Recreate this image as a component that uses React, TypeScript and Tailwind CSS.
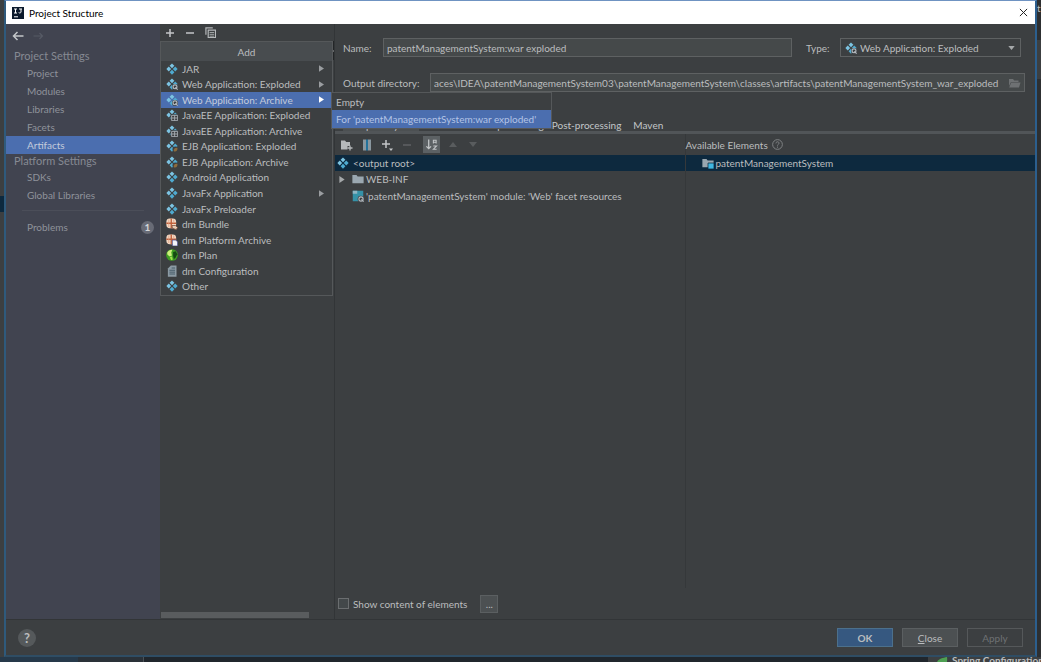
import type { ReactNode } from "react";

type Badge = "none" | "web" | "grid" | "bean";

interface MenuItem {
  label: string;
  icon: ReactNode;
  submenu?: boolean;
  active?: boolean;
}

const ArtifactIcon = ({ badge = "none" }: { badge?: Badge }) => (
  <svg viewBox="0 0 16 16" className="size-3 shrink-0" aria-hidden="true">
    <path d="M8 0.500 11.200 3.700 8 6.900 4.800 3.700Z" fill="#7cc4e2" />
    <path d="M3.700 4.800 6.900 8 3.700 11.200 0.500 8Z" fill="#7cc4e2" />
    <path d="M12.300 4.800 15.500 8 12.300 11.200 9.100 8Z" fill="#4fabd0" />
    <path d="M8 9.100 11.200 12.300 8 15.500 4.800 12.300Z" fill="#4fabd0" />
    {badge === "web" && (
      <g>
        <circle cx="12" cy="12" r="4" fill="#3c3f41" />
        <circle cx="12" cy="11.800" r="2.600" fill="none" stroke="#b4bac0" strokeWidth="1.500" />
        <path d="M12.500 12.500l3 3" fill="none" stroke="#b4bac0" strokeWidth="1.600" />
      </g>
    )}
    {badge === "grid" && (
      <g>
        <rect x="6" y="7" width="10" height="9" fill="#3c3f41" />
        <path d="M7.500 8.500h8v7h-8zM7.500 12h8M11.500 8.500v7" fill="none" stroke="#a9b0b6" strokeWidth="1.200" />
      </g>
    )}
    {badge === "bean" && (
      <g>
        <circle cx="12.500" cy="12.500" r="3.800" fill="#3c3f41" />
        <path d="M10.500 15c-1-2.500 1-5 4.800-4.500 0.400 3-1.700 5.500-4.800 4.500Z" fill="#8d6b3c" />
      </g>
    )}
  </svg>
);

const BundleIcon = ({ archive = false }: { archive?: boolean }) => (
  <svg viewBox="0 0 16 16" className="size-3 shrink-0" aria-hidden="true">
    <rect x="0.500" y="0.500" width="13" height="13" rx="4.500" fill="#f3d9c3" />
    <path d="M7 0.500v13M0.500 7h13" stroke="#c0603a" strokeWidth="1.800" />
    <path d="M3.700 2v10M10.300 2v5" stroke="#dfa080" strokeWidth="1" />
    {archive ? (
      <path d="M8.500 8h4.500l2.500 2.500V16H8.500Z" fill="#f4f4f8" stroke="#4a4d8c" strokeWidth="1" />
    ) : (
      <path d="M8 10h4.500l3 2.500-2 3-5-2Z" fill="#e8cdb6" stroke="#7a4a33" strokeWidth="1" />
    )}
  </svg>
);

const PlanIcon = () => (
  <svg viewBox="0 0 16 16" className="size-3 shrink-0" aria-hidden="true">
    <circle cx="8" cy="8" r="7.800" fill="#3f9f22" />
    <path d="M1.500 5C3 2 6 0.500 8.500 1L7 4.500 8 8.500 5 10 2 7.500Z" fill="#cdf07c" />
    <path d="M9.500 4 13 3 15 7 13 11 10.500 13.500 9.500 9Z" fill="#164a14" />
    <path d="M5 11l3-1 1 4-2 1Z" fill="#a2e44c" />
  </svg>
);

const ConfigIcon = () => (
  <svg viewBox="0 0 16 16" className="size-3 shrink-0" aria-hidden="true">
    <path d="M6.500 0.500H14v15H2.500V4.500Z" fill="#8b9aa3" />
    <path d="M4.500 7h7.500M4.500 9.500h7.500M4.500 12h7.500M7.500 4h4.500" stroke="#3f5562" strokeWidth="1.200" />
  </svg>
);

const FolderIcon = ({ module = false }: { module?: boolean }) => (
  <svg viewBox="0 0 16 16" className="size-3 shrink-0" aria-hidden="true">
    <path d="M0.500 2.500h5.500l1.500 2H15.500v9H0.500Z" fill="#9aa7b0" />
    {module && <path d="M8 8h8v8H8Z" fill="#40b6e0" stroke="#0d293e" strokeWidth="1" />}
  </svg>
);

const FacetIcon = () => (
  <svg viewBox="0 0 16 16" className="size-3 shrink-0" aria-hidden="true">
    <path d="M1 1h14v14H1Z" fill="#3592a8" />
    <path d="M1 1h6v4H1Z" fill="#8fb6c4" />
    <circle cx="12" cy="12" r="4.500" fill="#3c3f41" />
    <circle cx="12" cy="12" r="2.800" fill="none" stroke="#b4bac0" strokeWidth="1.500" />
    <path d="M12.500 12.500l3 3" stroke="#b4bac0" strokeWidth="1.500" />
  </svg>
);

const Triangle = ({ className }: { className: string }) => (
  <svg viewBox="0 0 6 8" className={className} aria-hidden="true">
    <path d="M0 0 6 4 0 8Z" fill="currentColor" />
  </svg>
);

const PlusIcon = () => (
  <svg viewBox="0 0 10 10" className="size-[10px]" aria-hidden="true">
    <path d="M5 1v8M1 5h8" stroke="#c3c6c8" strokeWidth="1.500" />
  </svg>
);

const MinusIcon = ({ color }: { color: string }) => (
  <svg viewBox="0 0 10 10" className="size-[10px]" aria-hidden="true">
    <path d="M1 5h8" stroke={color} strokeWidth="1.500" />
  </svg>
);

const menuItems: MenuItem[] = [
  { label: "JAR", icon: <ArtifactIcon />, submenu: true },
  { label: "Web Application: Exploded", icon: <ArtifactIcon badge="web" />, submenu: true },
  { label: "Web Application: Archive", icon: <ArtifactIcon badge="web" />, submenu: true, active: true },
  { label: "JavaEE Application: Exploded", icon: <ArtifactIcon badge="grid" /> },
  { label: "JavaEE Application: Archive", icon: <ArtifactIcon badge="grid" /> },
  { label: "EJB Application: Exploded", icon: <ArtifactIcon badge="bean" /> },
  { label: "EJB Application: Archive", icon: <ArtifactIcon badge="bean" /> },
  { label: "Android Application", icon: <ArtifactIcon /> },
  { label: "JavaFx Application", icon: <ArtifactIcon />, submenu: true },
  { label: "JavaFx Preloader", icon: <ArtifactIcon /> },
  { label: "dm Bundle", icon: <BundleIcon /> },
  { label: "dm Platform Archive", icon: <BundleIcon archive /> },
  { label: "dm Plan", icon: <PlanIcon /> },
  { label: "dm Configuration", icon: <ConfigIcon /> },
  { label: "Other", icon: <ArtifactIcon /> },
];

const projectLinks = ["Project", "Modules", "Libraries", "Facets", "Artifacts"];
const platformLinks = ["SDKs", "Global Libraries"];

const SideLink = ({ label }: { label: string }) => (
  <a
    href="#"
    className={
      label === "Artifacts"
        ? "flex h-[18px] items-center bg-[#4b6eaf] pl-[21px] text-[#c3cbdb]"
        : "flex h-[18px] items-center pl-[21px] text-[#8f939b]"
    }
  >
    {label}
  </a>
);

const Sidebar = () => (
  <nav className="w-[154px] shrink-0 bg-[#414450]">
    <div className="flex h-[23px] items-center gap-2 pl-[6px]">
      <button aria-label="Back">
        <svg viewBox="0 0 12 10" className="h-[10px] w-3">
          <path d="M11.500 5H1.500M5.500 1 1.500 5l4 4" fill="none" stroke="#c3c6c8" strokeWidth="1.500" />
        </svg>
      </button>
      <button aria-label="Forward" disabled>
        <svg viewBox="0 0 12 10" className="h-[10px] w-3">
          <path d="M1.500 5h9M7.500 2 10.500 5 7.500 8" fill="none" stroke="#565a65" strokeWidth="1.200" />
        </svg>
      </button>
    </div>
    <h2 className="flex h-[17px] items-center pl-2 text-[11px] text-[#868a93]">Project Settings</h2>
    {projectLinks.map((label) => (
      <SideLink key={label} label={label} />
    ))}
    <h2 className="flex h-[14px] items-center pl-2 text-[11px] text-[#868a93]">Platform Settings</h2>
    {platformLinks.map((label) => (
      <SideLink key={label} label={label} />
    ))}
    <hr className="mx-4 my-[6px] border-[#4b4e59]" />
    <a href="#" className="flex h-5 items-center justify-between pr-[6px] pl-[21px] text-[#8f939b]">
      Problems
      <span className="flex size-[13px] items-center justify-center rounded-full bg-[#686b76] font-bold text-[#d5d7db]">
        1
      </span>
    </a>
  </nav>
);

const AddMenu = () => (
  <div className="absolute top-[17px] left-0 z-10 w-[173px] border border-[#55585a] bg-[#3c3f41]">
    <div className="flex h-[19px] items-center justify-center bg-[#484c4f]">Add</div>
    <ul className="flex h-[234px] flex-col pb-px">
      {menuItems.map((item) => (
        <li key={item.label} className="flex min-h-0 flex-1">
          <button
            className={
              item.active
                ? "flex w-full items-center gap-1 bg-[#4b6eaf] pr-2 pl-[5px] text-left text-[#c3cbdb]"
                : "flex w-full items-center gap-1 pr-2 pl-[5px] text-left"
            }
          >
            {item.icon}
            <span className="flex-1 whitespace-nowrap">{item.label}</span>
            {item.submenu && (
              <Triangle className={item.active ? "h-[7px] w-[5px] text-white" : "h-[7px] w-[5px] text-[#9a9da0]"} />
            )}
          </button>
        </li>
      ))}
    </ul>
    {/* second level, opened from "Web Application: Archive" */}
    <div className="absolute top-[50px] left-[170px] w-[221px] border border-[#55585a] bg-[#3c3f41]">
      <button className="flex h-[17px] w-full items-center pl-1">Empty</button>
      <button className="flex h-[18px] w-full items-center bg-[#4b6eaf] pl-1 whitespace-nowrap text-[#b3c4e6]">
        For 'patentManagementSystem:war exploded'
      </button>
    </div>
  </div>
);

const ArtifactList = () => (
  <section className="relative flex w-[175px] shrink-0 flex-col border-r border-[#323537]">
    <div className="flex h-[17px] items-center gap-[10px] pl-[5px]">
      <button aria-label="Add"><PlusIcon /></button>
      <button aria-label="Remove"><MinusIcon color="#c3c6c8" /></button>
      <button aria-label="Copy">
        <svg viewBox="0 0 12 12" className="size-[11px]">
          <path d="M1 8.500V1h7.500" fill="none" stroke="#b5b8ba" strokeWidth="1.300" />
          <path d="M3.500 3.500h8v8h-8z" fill="none" stroke="#b5b8ba" strokeWidth="1.300" />
          <path d="M5 6h5M5 8h5M5 10h5" stroke="#b5b8ba" strokeWidth="0.900" />
        </svg>
      </button>
    </div>
    <AddMenu />
    {/* end of the selected row, sticking out behind the menu */}
    <div className="flex h-[19px] w-[3px] items-center self-end bg-[#232527]">
      <svg viewBox="0 0 3 6" className="h-[6px] w-[3px]" aria-hidden="true">
        <path d="M0 0.500 2.500 3 0 5.500" fill="none" stroke="#a5a8aa" strokeWidth="1" />
      </svg>
    </div>
    <div className="flex-1" />
    <div className="mb-px ml-px h-[6px] w-[148px] bg-[#595c5e]" />
  </section>
);

const LayoutToolbar = () => (
  <div className="flex h-[21px] items-center gap-[9px] pl-[5px]">
    <button aria-label="Create directory">
      <svg viewBox="0 0 13 12" className="h-3 w-[13px]">
        <path d="M1 1.500h4l1.200 1.500H10v4H7.500v3.500H1Z" fill="#b5b8ba" />
        <path d="M10 6.500v5M7.500 9h5" stroke="#b5b8ba" strokeWidth="1.300" />
      </svg>
    </button>
    <button aria-label="Create archive">
      <svg viewBox="0 0 10 12" className="h-3 w-[10px]">
        <path d="M1 0.500h3v11H1z" fill="#8a979f" />
        <path d="M6 0.500h3v11H6z" fill="#8a979f" />
        <path d="M4 0.500h2v11H4z" fill="#24729b" />
      </svg>
    </button>
    <button aria-label="Add copy of">
      <svg viewBox="0 0 12 12" className="size-3">
        <path d="M5 1v8M1 5h8" stroke="#c3c6c8" strokeWidth="1.500" />
        <path d="M8 9.500h4l-2 2.500Z" fill="#c3c6c8" />
      </svg>
    </button>
    <button aria-label="Remove element" disabled><MinusIcon color="#5f6264" /></button>
    <button aria-label="Sort by name" className="ml-[2px] flex h-[17px] w-[17px] items-center justify-center bg-[#5c6164]">
      <svg viewBox="0 0 14 14" className="size-[13px]">
        <path d="M4 1.500v10M1.500 9 4 11.500 6.500 9" fill="none" stroke="#c3c6c8" strokeWidth="1.400" />
        <path d="M9 6V2.500h3V6M9 4.500h3M9 8.500h3.500L9 12h3.500" fill="none" stroke="#c3c6c8" strokeWidth="1.100" />
      </svg>
    </button>
    <button aria-label="Move up" disabled>
      <svg viewBox="0 0 10 6" className="h-[5px] w-2"><path d="M5 0 10 6H0Z" fill="#595c5e" /></svg>
    </button>
    <button aria-label="Move down" disabled className="pl-[3px]">
      <svg viewBox="0 0 10 6" className="h-[5px] w-2"><path d="M0 0h10L5 6Z" fill="#595c5e" /></svg>
    </button>
  </div>
);

const Editor = () => (
  <section className="flex min-w-0 flex-1 flex-col">
    <div className="flex items-center pt-[14px] pr-[14px] pl-2">
      <label htmlFor="name" className="w-10">Name:</label>
      <input
        id="name"
        defaultValue="patentManagementSystem:war exploded"
        className="h-[19px] min-w-0 flex-1 border border-[#5e6162] bg-[#45494a] px-[3px] outline-none"
      />
      <label htmlFor="type" className="w-12 pl-[14px]">Type:</label>
      <div className="flex h-[19px] w-[181px] items-center gap-[3px] border border-[#5e6162] bg-[#3c3f41] pr-[5px] pl-1">
        <ArtifactIcon badge="web" />
        <select id="type" className="min-w-0 flex-1 appearance-none bg-transparent outline-none">
          <option>Web Application: Exploded</option>
        </select>
        <svg viewBox="0 0 8 5" className="h-1 w-[7px]" aria-hidden="true">
          <path d="M0 0h8L4 5Z" fill="#a5a8aa" />
        </svg>
      </div>
    </div>
    <div className="flex items-center pt-4 pr-[10px] pl-2">
      <label htmlFor="output" className="w-[87px]">Output directory:</label>
      <div className="flex h-[19px] min-w-0 flex-1 items-center border border-[#5e6162] bg-[#45494a] pr-[3px]">
        <input
          id="output"
          defaultValue="aces\IDEA\patentManagementSystem03\patentManagementSystem\classes\artifacts\patentManagementSystem_war_exploded"
          className="min-w-0 flex-1 bg-transparent pl-[3px] outline-none"
        />
        <button aria-label="Browse">
          <svg viewBox="0 0 13 12" className="h-3 w-[13px]">
            <path d="M1 2h4l1.200 1.500h4.300V5H3L1 9Z" fill="#6e7173" />
            <path d="M3.200 5.500h9.300L11 10.500H1.200Z" fill="#6e7173" />
          </svg>
        </button>
      </div>
    </div>
    <div className="mt-[26px] flex h-4 border-b-[3px] border-[#515558] pl-2 text-[#c3c6c8]">
      <button className="flex h-[13px] items-center bg-[#4c5052] px-[6px]">Output Layout</button>
      <button className="flex h-[13px] items-center px-[6px]">Validation</button>
      <button className="flex h-[13px] items-center px-1">Pre-processing</button>
      <button className="flex h-[13px] items-center px-1">Post-processing</button>
      <button className="flex h-[13px] items-center px-2">Maven</button>
    </div>
    <div className="flex flex-1">
      <div className="flex-1 border-r border-[#35383a]">
        <LayoutToolbar />
        <ul>
          <li className="flex h-4 items-center gap-1 bg-[#0d293e] pl-[2px]">
            <ArtifactIcon />
            &lt;output root&gt;
          </li>
          <li className="flex h-4 items-center gap-[2px] pl-1">
            <Triangle className="mr-[5px] h-[7px] w-[6px] text-[#a5a8aa]" />
            <FolderIcon />
            WEB-INF
          </li>
          <li className="flex h-[17px] items-center gap-[2px] pl-[17px]">
            <FacetIcon />
            'patentManagementSystem' module: 'Web' facet resources
          </li>
        </ul>
      </div>
      <div className="flex-1">
        <div className="flex h-[21px] items-center gap-1">
          Available Elements
          <button aria-label="Help on elements">
            <svg viewBox="0 0 12 12" className="size-[11px]">
              <circle cx="6" cy="6" r="5.300" fill="none" stroke="#85888a" strokeWidth="1" />
              <path d="M4.300 4.800c0-2.400 3.400-2.200 3.400-0.200C7.700 5.800 6 5.800 6 7.200M6 8.300v1.200" fill="none" stroke="#85888a" strokeWidth="1" />
            </svg>
          </button>
        </div>
        <div className="flex h-4 items-center gap-[2px] bg-[#0d293e] pl-4">
          <FolderIcon module />
          patentManagementSystem
        </div>
      </div>
    </div>
    <div className="flex h-[31px] items-center gap-[13px] pl-[3px]">
      <label className="flex items-center gap-1">
        <input type="checkbox" className="size-[11px] appearance-none border border-[#6b6e70] bg-[#43484a]" />
        Show content of elements
      </label>
      <button className="flex size-[18px] items-center justify-center border border-[#5b5f61] bg-[#4c5052]" aria-label="Configure content">
        ...
      </button>
    </div>
  </section>
);

const App = () => {
  return (
    <div className="flex h-screen flex-col overflow-hidden bg-[#2b2b2b] font-['Lato','Open_Sans',sans-serif] text-[10px] leading-[14px] text-[#bbbdbf]">
      <div className="flex min-h-0 flex-1">
        {/* slivers of the IDE window behind the dialog */}
        <div className="flex w-1 flex-col bg-[#3c3f41]">
          <div className="mt-[196px] h-4 bg-[#0d293e]" />
        </div>
        <main className="flex min-w-0 flex-1 flex-col border-x-2 border-t border-b-2 border-t-[#6f93c2] border-r-[#2c5f8e] border-b-[#2f4d64] border-l-[#2f5a7c] bg-[#3c3f41]">
          <header className="flex h-[23px] items-center bg-white pr-[7px] pl-[6px] text-black">
            <svg viewBox="0 0 12 12" className="size-3" aria-hidden="true">
              <rect width="12" height="12" fill="#0c1a2c" />
              <path d="M2 2h3M3.500 2v4M2 6h3M7 2h3M9 2v3c0 1-1.500 1.200-2.300 0.600M2 9.800h4" fill="none" stroke="#fff" strokeWidth="1" />
            </svg>
            <h1 className="flex-1 pl-[5px]">Project Structure</h1>
            <button aria-label="Close window">
              <svg viewBox="0 0 10 10" className="size-[9px]">
                <path d="M1 1l8 8M9 1l-8 8" stroke="#222" strokeWidth="1.100" />
              </svg>
            </button>
          </header>
          <div className="flex min-h-0 flex-1">
            <Sidebar />
            <ArtifactList />
            <Editor />
          </div>
          <footer className="flex h-9 items-center gap-[9px] border-t border-[#323537] pr-3 pl-3">
            <button className="flex size-[18px] items-center justify-center rounded-full bg-[#55595b] text-[13px] font-bold" aria-label="Help">
              ?
            </button>
            <div className="flex-1" />
            <button className="h-[19px] w-14 border border-[#4c708c] bg-[#365880] font-bold">OK</button>
            <button className="h-[19px] w-14 border border-[#5b5f61] bg-[#4c5052]">
              <u>C</u>lose
            </button>
            <button className="h-[19px] w-14 border border-[#55585a] text-[#6e7173]" disabled>
              Apply
            </button>
          </footer>
        </main>
        <div className="flex w-1 flex-col overflow-hidden bg-[#2d2f31]">
          <span className="h-10 pt-px">t</span>
          <div className="h-[39px] bg-[#3c3f41]" />
        </div>
      </div>
      <div className="flex h-[5px] overflow-hidden bg-[#20262c]">
        <div className="w-[78px] bg-[#26394a]" />
        <div className="w-[66px] border-r border-[#4b5156] bg-[#2a3138]" />
        <div className="flex-1" />
        <div className="flex w-[113px] gap-1 bg-[#3c3f41] pl-2 font-bold">
          <svg viewBox="0 0 12 12" className="size-3 shrink-0" aria-hidden="true">
            <path d="M1 8C0 2 6 1 11 0c1 6-2 11-7 11C2 11 1 10 1 8Z" fill="#4ea052" />
          </svg>
          <span className="-mt-1 whitespace-nowrap">Spring Configuration</span>
        </div>
      </div>
    </div>
  );
};

export default App;
